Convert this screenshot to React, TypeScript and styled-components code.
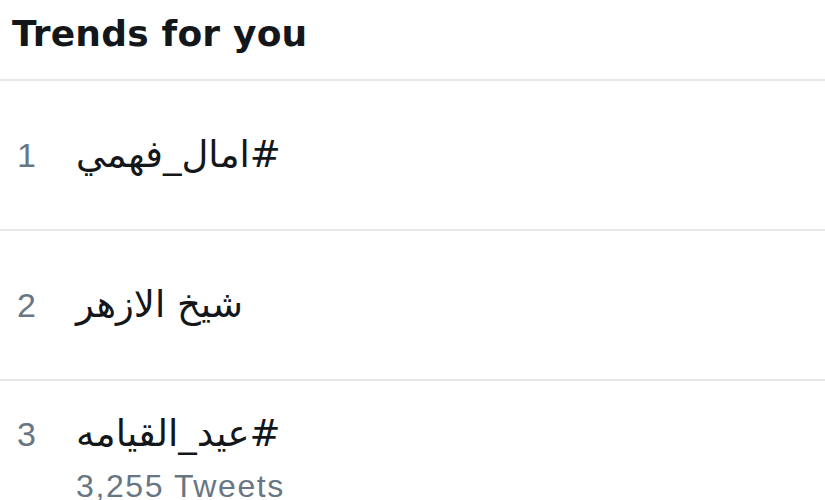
import React from 'react';
import styled, { createGlobalStyle } from 'styled-components';

interface Trend {
  rank: number;
  name: string;
  tweets?: string;
}

const trends: Trend[] = [
  { rank: 1, name: '#امال_فهمي' },
  { rank: 2, name: 'شيخ الازهر' },
  { rank: 3, name: '#عيد_القيامه', tweets: '3,255 Tweets' },
];

const GlobalStyle = createGlobalStyle`
  html, body {
    margin: 0;
    padding: 0;
    background: #fff;
    overflow: hidden;
  }
`;

export default function App() {
  return (
    <>
      <GlobalStyle />
      <Panel>
        <Header>Trends for you</Header>
        {trends.map(t => (
          <Row key={t.rank} hasMeta={!!t.tweets}>
            <Entry>
              <Rank>{t.rank}</Rank>
              <Name dir="rtl">{t.name}</Name>
              {t.tweets && <Meta>{t.tweets}</Meta>}
            </Entry>
          </Row>
        ))}
      </Panel>
    </>
  );
}

const Panel = styled.div`
  width: 825px;
  background: #fff;
`;

const Header = styled.h2`
  margin: 0;
  height: 81px;
  box-sizing: border-box;
  padding: 14px 0 0 12px;
  border-bottom: 2px solid #e6e8ea;
  font-family: "DejaVu Sans", "Liberation Sans", sans-serif;
  font-weight: 700;
  font-size: 36px;
  letter-spacing: 0.2px;
  line-height: 40px;
  color: #14171a;
`;

const Row = styled.div<{ hasMeta: boolean }>`
  display: flex;
  align-items: center;
  height: 150px;
  box-sizing: border-box;
  padding-top: ${props => props.hasMeta ? 8 : 0}px;
  border-bottom: 2px solid #e6e8ea;
`;

const Entry = styled.div`
  display: grid;
  grid-template-columns: 76px auto;
  row-gap: 10px;
  justify-items: start;
`;

const Rank = styled.span`
  padding-left: 17px;
  font-family: "Liberation Sans", Arial, sans-serif;
  font-size: 34px;
  line-height: 44px;
  color: #687683;
`;

const Name = styled.span`
  font-family: "DejaVu Sans", "Liberation Sans", sans-serif;
  font-size: 37px;
  line-height: 44px;
  color: #14171a;
`;

const Meta = styled.span`
  grid-column: 2;
  font-family: "Liberation Sans", Arial, sans-serif;
  font-size: 32px;
  letter-spacing: 1.6px;
  line-height: 40px;
  color: #687683;
`;
